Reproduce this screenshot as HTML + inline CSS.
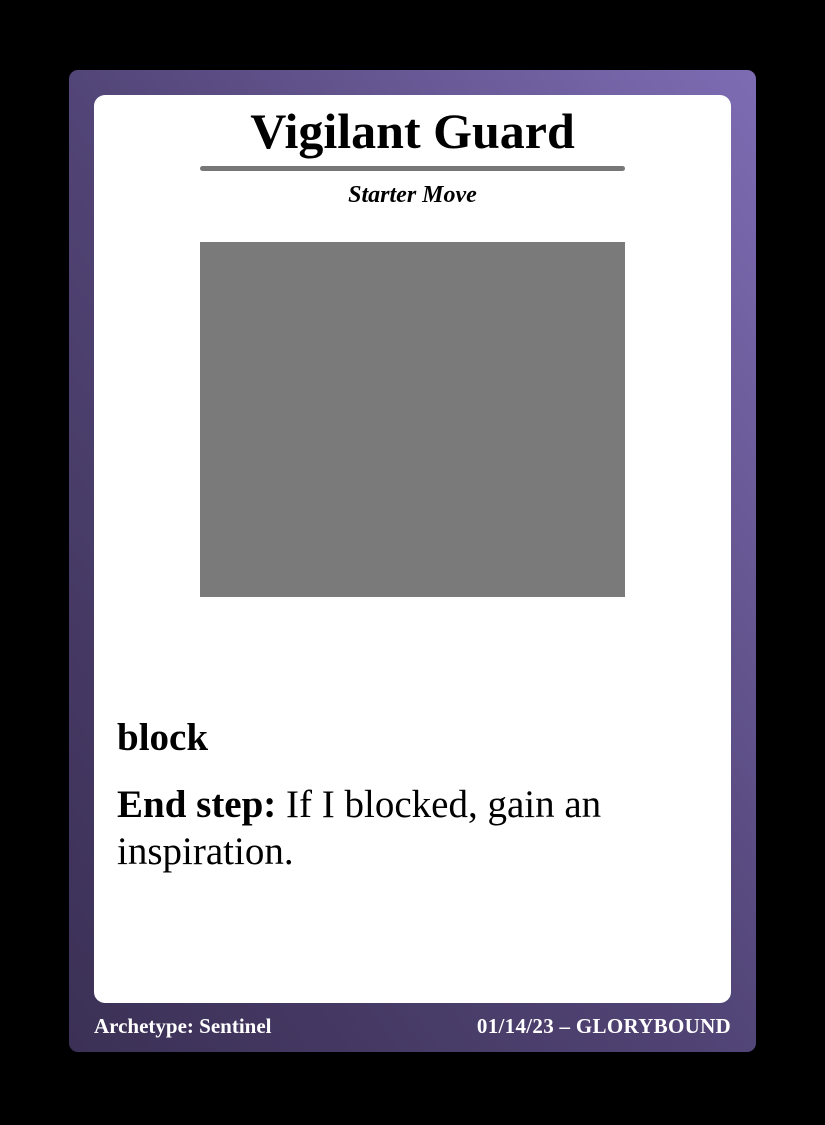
<!DOCTYPE html>
<html><head><style>
body{margin:0;background:#000;width:825px;height:1125px;position:relative;overflow:hidden;font-family:"Liberation Serif",serif}
.card{position:absolute;left:69px;top:70px;width:687px;height:982px;border-radius:9px;background:linear-gradient(to top right,#3b3055 0%,#524577 50%,#7e6cb3 100%)}
.inner{position:absolute;left:25px;top:25px;width:637px;height:908px;background:#fff;border-radius:11px}
.title{position:absolute;left:0;width:637px;top:4px;text-align:center;font-weight:bold;font-size:50px;line-height:64px;color:#000}
.rule{position:absolute;left:106px;top:71px;width:425px;height:5px;background:#777;border-radius:3px}
.sub{position:absolute;left:0;width:637px;top:85px;text-align:center;font-style:italic;font-weight:bold;font-size:24px;line-height:30px}
.img{position:absolute;left:106px;top:147px;width:425px;height:355px;background:#7a7a7a}
.txt{position:absolute;left:23px;width:600px;font-size:39px;line-height:47px;color:#000}
.foot{position:absolute;top:943px;font-weight:bold;font-size:21px;color:#fff;line-height:26px}
</style></head><body>
<div class="card">
 <div class="inner">
  <div class="title">Vigilant Guard</div>
  <div class="rule"></div>
  <div class="sub">Starter Move</div>
  <div class="img"></div>
  <div class="txt" style="top:619px;font-weight:bold">block</div>
  <div class="txt" style="top:686px"><b>End step:</b> If I blocked, gain an inspiration.</div>
 </div>
 <div class="foot" style="left:25px">Archetype: Sentinel</div>
 <div class="foot" style="right:25px;letter-spacing:0.3px">01/14/23 – GLORYBOUND</div>
</div>
</body></html>
